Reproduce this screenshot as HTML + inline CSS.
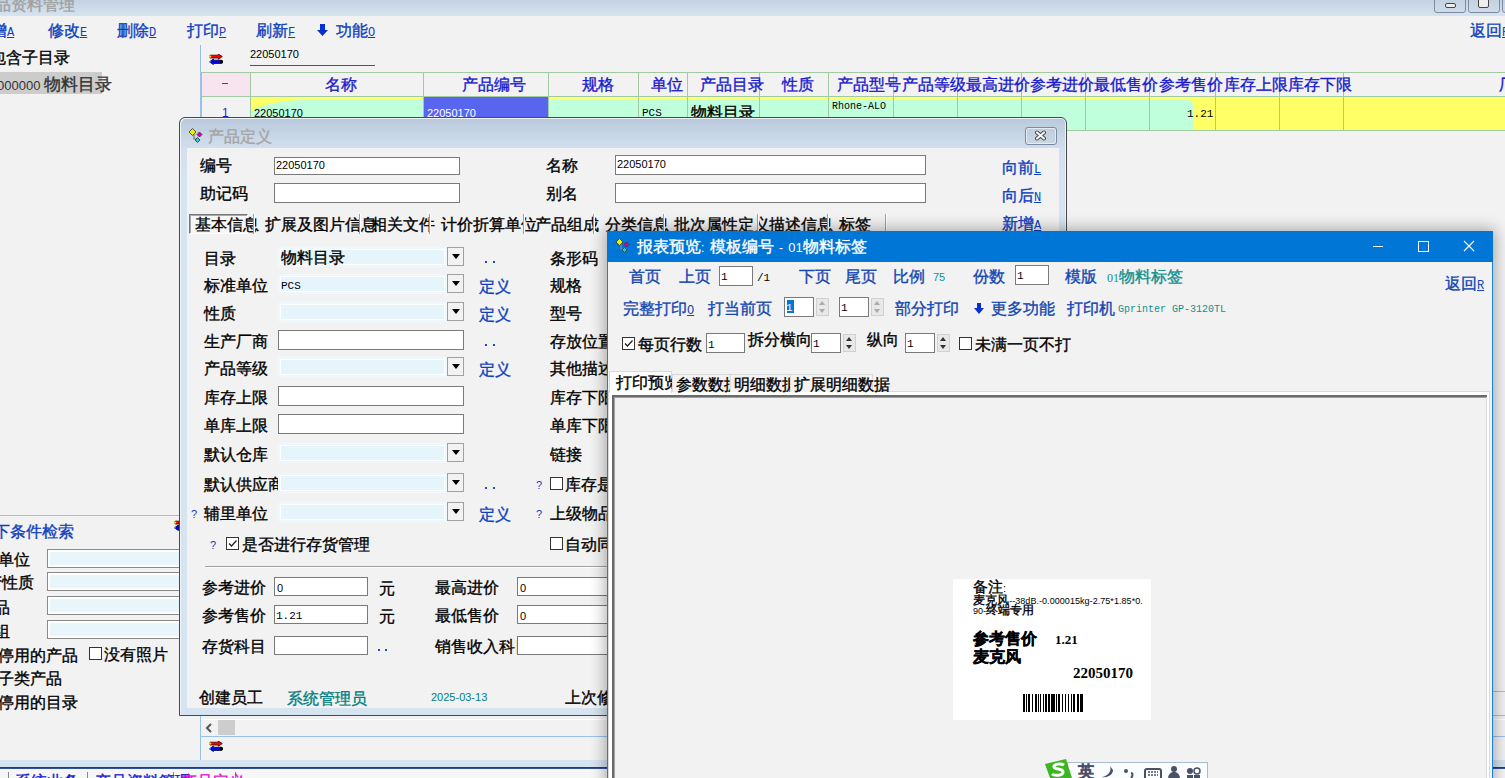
<!DOCTYPE html>
<html><head><meta charset="utf-8"><style>
*{box-sizing:border-box}
html,body{margin:0;padding:0}
body{width:1505px;height:778px;overflow:hidden;position:relative;background:#f2f2f2;font-family:"Liberation Sans",sans-serif;font-size:12px;color:#000}
.a{position:absolute}
.t{position:absolute;white-space:nowrap;font-size:12px;line-height:12px}
.c{font-style:normal;font-size:1.3333em;-webkit-text-stroke:.35px}
.m{font-family:"Liberation Mono",monospace}
.bl{color:#0f3fbf}
.u{text-decoration:underline}
.in{position:absolute;background:#fff;border:1px solid #7a7a7a}
.cb{position:absolute;background:#e6f5fc;border:2px solid #fff;outline:1px solid #e6f5fc}
.dd{position:absolute;background:#f2f2f2;border:1px solid #a0a0a0}
.dd:after{content:"";position:absolute;left:4px;top:6px;border-left:4px solid transparent;border-right:4px solid transparent;border-top:5px solid #000}
.hl{position:absolute;background:#a2c9a2}
.vl{position:absolute;background:#a2c9a2}
</style></head><body>

<!-- ============ MAIN WINDOW ============ -->
<div class=a style="left:0;top:0;width:1505px;height:16px;background:linear-gradient(#c3d2e3,#d7e3ef)"></div>
<div class=t style="left:-21px;top:-1px;color:#a0a0a0"><i class=c>产品资料管理</i></div>
<div class=a style="left:1434px;top:-4px;width:32px;height:17px;border:1px solid #7d8aa0;border-radius:3px;background:linear-gradient(#c0cfe0,#d0dcea)"></div>
<div class=a style="left:1445px;top:3px;width:11px;height:5px;border:1px solid #444;border-radius:2px;background:#eee"></div>
<div class=a style="left:1468px;top:-4px;width:32px;height:17px;border:1px solid #7d8aa0;border-radius:3px;background:linear-gradient(#c0cfe0,#d0dcea)"></div>
<div class=a style="left:1478px;top:-2px;width:11px;height:10px;border:1px solid #444;border-radius:2px;background:#eee"></div>
<div class=a style="left:1502px;top:-4px;width:12px;height:17px;border:1px solid #7d8aa0;border-radius:3px;background:linear-gradient(#c0cfe0,#d0dcea)"></div>

<!-- toolbar -->
<div class="t bl" style="left:-9px;top:25px"><i class=c>增</i><span class="m u">A</span></div>
<div class="t bl" style="left:48px;top:25px"><i class=c>修改</i><span class="m u">E</span></div>
<div class="t bl" style="left:117px;top:25px"><i class=c>删除</i><span class="m u">D</span></div>
<div class="t bl" style="left:187px;top:25px"><i class=c>打印</i><span class="m u">P</span></div>
<div class="t bl" style="left:256px;top:25px"><i class=c>刷新</i><span class="m u">F</span></div>
<svg class=a style="left:317px;top:24px" width="11" height="12" viewBox="0 0 11 12"><path d="M3 0h5v6h3l-5.5 6L0 6h3z" fill="#0a2fd0"/></svg>
<div class="t bl" style="left:336px;top:25px"><i class=c>功能</i><span class="m u">O</span></div>
<div class="t bl" style="left:1470px;top:25px"><i class=c>返回</i><span class="m u">R</span></div>

<!-- left tree -->
<div class=t style="left:-10px;top:52px"><i class=c>包含子目录</i></div>
<div class=a style="left:0;top:72px;width:102px;height:22px;background:#cccccc"></div>
<div class=t style="left:-3px;top:78px;font-size:13px;color:#333">000000 <i class=c>物料目录</i></div>

<!-- left search panel -->
<div class=a style="left:0;top:515px;width:200px;height:1px;background:#99c0e6"></div>
<div class="t bl" style="left:-6px;top:526px"><i class=c>下条件检索</i></div>
<svg class=a style="left:174px;top:520px" width="14" height="11" viewBox="0 0 14 11"><path d="M1 1.2H9.3V0L13.3 2.6 9.3 5.2V4H1z" fill="#f00" stroke="#300" stroke-width=".8"/><circle cx="1.3" cy="2.6" r="1.1" fill="#fd0"/><path d="M12.5 6.2H4.4V5L.4 7.8l4 2.8V9.4h8.1z" fill="#00f" stroke="#002" stroke-width=".8"/><circle cx="12.5" cy="7.8" r="1.7" fill="#000"/><circle cx="1" cy="7.8" r=".8" fill="#3cf"/></svg>
<div class=t style="left:-2px;top:554px"><i class=c>单位</i></div>
<div class=t style="left:-14px;top:577px"><i class=c>产性质</i></div>
<div class=t style="left:-6px;top:602px"><i class=c>品</i></div>
<div class=t style="left:-6px;top:626px"><i class=c>组</i></div>
<div class=t style="left:-2px;top:650px"><i class=c>停用的产品</i></div>
<div class=t style="left:-2px;top:673px"><i class=c>子类产品</i></div>
<div class=t style="left:-2px;top:697px"><i class=c>停用的目录</i></div>
<div class=in style="left:47px;top:549px;width:140px;height:19px;border-color:#8a8a8a;background:#e8f6fc;box-shadow:inset 0 0 0 2px #fff"></div>
<div class=in style="left:47px;top:572px;width:140px;height:19px;border-color:#8a8a8a;background:#e8f6fc;box-shadow:inset 0 0 0 2px #fff"></div>
<div class=in style="left:47px;top:596px;width:140px;height:19px;border-color:#8a8a8a;background:#e8f6fc;box-shadow:inset 0 0 0 2px #fff"></div>
<div class=in style="left:47px;top:620px;width:140px;height:19px;border-color:#8a8a8a;background:#e8f6fc;box-shadow:inset 0 0 0 2px #fff"></div>
<div class=a style="left:89px;top:647px;width:13px;height:13px;border:1px solid #333;background:#fff"></div>
<div class=t style="left:104px;top:649px"><i class=c>没有照片</i></div>

<!-- grid area -->
<div class=a style="left:200px;top:45px;width:1px;height:715px;background:#99c0e6"></div>
<div class=t style="left:250px;top:48px;font-size:11px">22050170</div>
<div class=a style="left:250px;top:65px;width:125px;height:1px;background:#555"></div>

<!-- grid header -->
<div class=a style="left:201px;top:72px;width:1304px;height:59px;background:#f2f2f2"></div>
<div class=a style="left:201px;top:73px;width:49px;height:23px;background:#f8e4ee"></div>
<div class=hl style="left:201px;top:72px;width:1304px;height:1px"></div>
<div class=hl style="left:201px;top:96px;width:1304px;height:1px"></div>
<!-- data row -->
<div class=a style="left:250px;top:97px;width:1255px;height:33px;background:#bfffdc"></div>
<div class=a style="left:250px;top:97px;width:1255px;height:3px;background:#ffff66"></div>
<div class=a style="left:1149px;top:97px;width:356px;height:33px;background:#ffff66"></div><div class=a style="left:1150px;top:100px;width:43px;height:30px;background:#bfffdc;border-top-right-radius:5px"></div><svg class=a style="left:250px;top:100px" width="50" height="12"><path d="M0 0H49C30 1 10 5 0 12z" fill="#ffff66"/></svg>
<div class=a style="left:424px;top:97px;width:124px;height:33px;background:#5865ef"></div>
<div class=hl style="left:201px;top:130px;width:1304px;height:1px"></div>
<div class=vl style="left:250px;top:72px;width:1px;height:59px"></div>
<div class=vl style="left:423px;top:72px;width:1px;height:59px"></div>
<div class=t style="left:325px;top:79px;color:#1a1acc"><i class=c>名称</i></div>
<div class=vl style="left:548px;top:72px;width:1px;height:59px"></div>
<div class=t style="left:462px;top:79px;color:#1a1acc"><i class=c>产品编号</i></div>
<div class=vl style="left:638px;top:72px;width:1px;height:59px"></div>
<div class=t style="left:582px;top:79px;color:#1a1acc"><i class=c>规格</i></div>
<div class=vl style="left:687px;top:72px;width:1px;height:59px"></div>
<div class=t style="left:651px;top:79px;color:#1a1acc"><i class=c>单位</i></div>
<div class=vl style="left:759px;top:72px;width:1px;height:59px"></div>
<div class=t style="left:700px;top:79px;color:#1a1acc"><i class=c>产品目录</i></div>
<div class=vl style="left:828px;top:72px;width:1px;height:59px"></div>
<div class=t style="left:782px;top:79px;color:#1a1acc"><i class=c>性质</i></div>
<div class=vl style="left:893px;top:72px;width:1px;height:59px"></div>
<div class=t style="left:837px;top:79px;color:#1a1acc"><i class=c>产品型号</i></div>
<div class=vl style="left:957px;top:72px;width:1px;height:59px"></div>
<div class=t style="left:902px;top:79px;color:#1a1acc"><i class=c>产品等级</i></div>
<div class=vl style="left:1021px;top:72px;width:1px;height:59px"></div>
<div class=t style="left:966px;top:79px;color:#1a1acc"><i class=c>最高进价</i></div>
<div class=vl style="left:1085px;top:72px;width:1px;height:59px"></div>
<div class=t style="left:1030px;top:79px;color:#1a1acc"><i class=c>参考进价</i></div>
<div class=vl style="left:1149px;top:72px;width:1px;height:59px"></div>
<div class=t style="left:1094px;top:79px;color:#1a1acc"><i class=c>最低售价</i></div>
<div class=vl style="left:1215px;top:72px;width:1px;height:59px"></div>
<div class=t style="left:1159px;top:79px;color:#1a1acc"><i class=c>参考售价</i></div>
<div class=vl style="left:1279px;top:72px;width:1px;height:59px"></div>
<div class=t style="left:1224px;top:79px;color:#1a1acc"><i class=c>库存上限</i></div>
<div class=vl style="left:1343px;top:72px;width:1px;height:59px"></div>
<div class=t style="left:1288px;top:79px;color:#1a1acc"><i class=c>库存下限</i></div>
<div class=t style="left:1499px;top:79px;color:#1a1acc"><i class=c>厂商</i></div>
<div class=a style="left:222px;top:83px;width:6px;height:1px;background:#f00"></div><div class=vl style="left:201px;top:72px;width:1px;height:59px"></div>
<div class=t style="left:222px;top:107px;color:#1a1acc">1</div>
<div class="t" style="left:254px;top:107px;font-size:11px">22050170</div>
<div class="t" style="left:427px;top:107px;font-size:11px;color:#fff">22050170</div>
<div class="t m" style="left:642px;top:107px;font-size:11px">PCS</div>
<div class="t" style="left:691px;top:107px"><i class=c>物料目录</i></div>
<div class="t m" style="left:832px;top:101px;font-size:10px">Rhone-ALO</div>
<div class="t m" style="left:1187px;top:108px;font-size:11px">1.21</div>
<svg class=a style="left:209px;top:54px" width="14" height="11" viewBox="0 0 14 11"><path d="M1 1.2H9.3V0L13.3 2.6 9.3 5.2V4H1z" fill="#f00" stroke="#300" stroke-width=".8"/><circle cx="1.3" cy="2.6" r="1.1" fill="#fd0"/><path d="M12.5 6.2H4.4V5L.4 7.8l4 2.8V9.4h8.1z" fill="#00f" stroke="#002" stroke-width=".8"/><circle cx="12.5" cy="7.8" r="1.7" fill="#000"/><circle cx="1" cy="7.8" r=".8" fill="#3cf"/></svg>
<!-- main bottom -->
<div class=hl style="left:201px;top:691px;width:1304px;height:1px"></div>
<div class=hl style="left:201px;top:715px;width:1304px;height:1px"></div>
<div class=a style="left:201px;top:719px;width:1304px;height:1px;background:#fff"></div>
<svg class=a style="left:205px;top:723px" width="8" height="10" viewBox="0 0 8 10"><path d="M6 1L2 5l4 4" stroke="#555" stroke-width="2" fill="none"/></svg>
<div class=a style="left:218px;top:720px;width:17px;height:15px;background:#cdcdcd"></div>
<div class=a style="left:201px;top:736px;width:1304px;height:1px;background:#99c0e6"></div>
<svg class=a style="left:209px;top:741px" width="14" height="11" viewBox="0 0 14 11"><path d="M1 1.2H9.3V0L13.3 2.6 9.3 5.2V4H1z" fill="#f00" stroke="#300" stroke-width=".8"/><circle cx="1.3" cy="2.6" r="1.1" fill="#fd0"/><path d="M12.5 6.2H4.4V5L.4 7.8l4 2.8V9.4h8.1z" fill="#00f" stroke="#002" stroke-width=".8"/><circle cx="12.5" cy="7.8" r="1.7" fill="#000"/><circle cx="1" cy="7.8" r=".8" fill="#3cf"/></svg>
<div class=a style="left:0;top:760px;width:1505px;height:7px;background:#d6e3f0"></div>
<div class=a style="left:0;top:767px;width:1505px;height:1px;background:#383c44"></div><div class=a style="left:0;top:768px;width:1505px;height:1px;background:#33509a"></div>
<div class=a style="left:0;top:769px;width:1505px;height:9px;background:#f7f7f7"></div>
<div class=a style="left:8px;top:772px;width:1px;height:6px;background:#888"></div>
<div class=a style="left:87px;top:772px;width:1px;height:6px;background:#888"></div>
<div class=a style="left:173px;top:772px;width:1px;height:6px;background:#888"></div>
<div class=a style="left:235px;top:772px;width:1px;height:6px;background:#888"></div>
<div class=t style="left:15px;top:776px;color:#1a1acc"><i class=c>系统业务</i>(?)</div>
<div class=t style="left:95px;top:776px;color:#1a1acc"><i class=c>产品资料管理</i></div>
<div class=t style="left:181px;top:776px;color:#e010d0"><i class=c>产品定义</i></div>
<!-- ============ DIALOG 产品定义 ============ -->
<div class=a style="left:179px;top:117px;width:888px;height:599px;border:1px solid #4a4a4a;border-radius:6px 6px 0 0;box-shadow:inset 1px 1px 0 #eef3f9,inset -1px 0 0 #eef3f9;background:linear-gradient(#b9c9dc 0,#d2dfed 31px,#d6e3f0 60px,#d6e3f0)"></div>
<div class=a style="left:187px;top:148px;width:872px;height:560px;background:#f2f2f2"></div>
<svg class=a style="left:188px;top:127px" width="18" height="18" viewBox="0 0 18 18"><path d="M6 5v7h4" stroke="#777" fill="none" stroke-width="1.2"/><path d="M1 5l3.5-3.5L8 5 4.5 8.5z" fill="#ee0" stroke="#333" stroke-width=".8"/><path d="M9 7.5l2.5-2.5L14 7.5 11.5 10z" fill="#d0a" stroke="#333" stroke-width=".8"/><path d="M7 13l2.5-2.5L12 13l-2.5 2.5z" fill="#2cc" stroke="#333" stroke-width=".8"/></svg>
<div class=t style="left:208px;top:131px;color:#a5a5a5"><i class=c>产品定义</i></div>
<div class=a style="left:1025px;top:127px;width:32px;height:18px;border:1px solid #7d8aa3;border-radius:3px;background:linear-gradient(#c0cedd,#cad7e5);box-shadow:inset 0 0 0 1px #e4ebf3"></div>
<svg class=a style="left:1034px;top:130px" width="14" height="12" viewBox="0 0 14 12"><path d="M3 2.5L10 8.5M10 2.5L3 8.5" stroke="#444" stroke-width="4" stroke-linecap="round"/><path d="M3 2.5L10 8.5M10 2.5L3 8.5" stroke="#f4f4f4" stroke-width="2.2" stroke-linecap="round"/></svg>
<div class=t style="left:200px;top:160px"><i class=c>编号</i></div>
<div class=t style="left:200px;top:188px"><i class=c>助记码</i></div>
<div class=in style="left:274px;top:157px;width:186px;height:18px"></div>
<div class=t style="left:276px;top:159px;font-size:11px">22050170</div>
<div class=in style="left:274px;top:183px;width:186px;height:20px"></div>
<div class=t style="left:546px;top:160px"><i class=c>名称</i></div>
<div class=t style="left:546px;top:188px"><i class=c>别名</i></div>
<div class=in style="left:615px;top:155px;width:311px;height:20px"></div>
<div class=t style="left:617px;top:158px;font-size:11px">22050170</div>
<div class=in style="left:615px;top:183px;width:311px;height:20px"></div>
<div class="t bl" style="left:1002px;top:162px"><i class=c>向前</i><span class="m u">L</span></div>
<div class="t bl" style="left:1002px;top:190px"><i class=c>向后</i><span class="m u">N</span></div>
<div class="t bl" style="left:1002px;top:218px"><i class=c>新增</i><span class="m u">A</span></div>
<div class=a style="left:189px;top:214px;width:59px;height:20px;border:1px solid;border-color:#777 #fff #fff #777;box-shadow:inset 1px 1px 0 #aaa;background:#f7f7f7"></div>
<div class=t style="left:195px;top:219px"><i class=c>基本信息</i></div>
<div class=t style="left:265px;top:219px"><i class=c>扩展及图片信息</i></div>
<div class=t style="left:371px;top:219px"><i class=c>相关文件</i></div>
<div class=t style="left:441px;top:219px"><i class=c>计价折算单位</i></div>
<div class=t style="left:535px;top:219px"><i class=c>产品组成</i></div>
<div class=t style="left:605px;top:219px"><i class=c>分类信息</i></div>
<div class=t style="left:674px;top:219px"><i class=c>批次属性定义</i></div>
<div class=t style="left:769px;top:219px"><i class=c>描述信息</i></div>
<div class=t style="left:839px;top:219px"><i class=c>标签</i></div>
<div class=a style="left:253px;top:214px;width:1px;height:20px;background:#a0a0a0;box-shadow:1px 0 0 #fff"></div>
<div class=a style="left:359px;top:214px;width:1px;height:20px;background:#a0a0a0;box-shadow:1px 0 0 #fff"></div>
<div class=a style="left:429px;top:214px;width:1px;height:20px;background:#a0a0a0;box-shadow:1px 0 0 #fff"></div>
<div class=a style="left:523px;top:214px;width:1px;height:20px;background:#a0a0a0;box-shadow:1px 0 0 #fff"></div>
<div class=a style="left:593px;top:214px;width:1px;height:20px;background:#a0a0a0;box-shadow:1px 0 0 #fff"></div>
<div class=a style="left:663px;top:214px;width:1px;height:20px;background:#a0a0a0;box-shadow:1px 0 0 #fff"></div>
<div class=a style="left:757px;top:214px;width:1px;height:20px;background:#a0a0a0;box-shadow:1px 0 0 #fff"></div>
<div class=a style="left:827px;top:214px;width:1px;height:20px;background:#a0a0a0;box-shadow:1px 0 0 #fff"></div>
<div class=a style="left:885px;top:214px;width:1px;height:20px;background:#a0a0a0;box-shadow:1px 0 0 #fff"></div>
<div class=t style="left:204px;top:253px"><i class=c>目录</i></div>
<div class=a style="left:278px;top:247px;width:169px;height:20px;background:#eef8fc;padding:2px"><div style="width:100%;height:100%;border:1px solid #fff;background:#e6f5fb"></div></div>
<div class=dd style="left:447px;top:247px;width:17px;height:19px"></div>
<div class=t style="left:281px;top:252px"><i class=c>物料目录</i></div>
<div class=a style="left:485px;top:261px;width:2px;height:2px;background:#1550c0;box-shadow:8px 0 0 #1550c0"></div>
<div class=t style="left:550px;top:253px"><i class=c>条形码</i></div>
<div class=t style="left:204px;top:280px"><i class=c>标准单位</i></div>
<div class=a style="left:278px;top:274px;width:169px;height:20px;background:#eef8fc;padding:2px"><div style="width:100%;height:100%;border:1px solid #fff;background:#e6f5fb"></div></div>
<div class=dd style="left:447px;top:274px;width:17px;height:19px"></div>
<div class=t style="left:281px;top:279px"><span class=m style="font-size:11px">PCS</span></div>
<div class="t bl" style="left:479px;top:281px"><i class=c>定义</i></div>
<div class=t style="left:550px;top:280px"><i class=c>规格</i></div>
<div class=t style="left:204px;top:308px"><i class=c>性质</i></div>
<div class=a style="left:278px;top:302px;width:169px;height:20px;background:#eef8fc;padding:2px"><div style="width:100%;height:100%;border:1px solid #fff;background:#e6f5fb"></div></div>
<div class=dd style="left:447px;top:302px;width:17px;height:19px"></div>
<div class="t bl" style="left:479px;top:309px"><i class=c>定义</i></div>
<div class=t style="left:550px;top:308px"><i class=c>型号</i></div>
<div class=t style="left:204px;top:336px"><i class=c>生产厂商</i></div>
<div class=in style="left:278px;top:330px;width:186px;height:20px"></div>
<div class=a style="left:485px;top:344px;width:2px;height:2px;background:#1550c0;box-shadow:8px 0 0 #1550c0"></div>
<div class=t style="left:550px;top:336px"><i class=c>存放位置</i></div>
<div class=t style="left:204px;top:363px"><i class=c>产品等级</i></div>
<div class=a style="left:278px;top:357px;width:169px;height:20px;background:#eef8fc;padding:2px"><div style="width:100%;height:100%;border:1px solid #fff;background:#e6f5fb"></div></div>
<div class=dd style="left:447px;top:357px;width:17px;height:19px"></div>
<div class="t bl" style="left:479px;top:364px"><i class=c>定义</i></div>
<div class=t style="left:550px;top:363px"><i class=c>其他描述</i></div>
<div class=t style="left:204px;top:392px"><i class=c>库存上限</i></div>
<div class=in style="left:278px;top:386px;width:186px;height:20px"></div>
<div class=t style="left:550px;top:392px"><i class=c>库存下限</i></div>
<div class=t style="left:204px;top:420px"><i class=c>单库上限</i></div>
<div class=in style="left:278px;top:414px;width:186px;height:20px"></div>
<div class=t style="left:550px;top:420px"><i class=c>单库下限</i></div>
<div class=t style="left:204px;top:449px"><i class=c>默认仓库</i></div>
<div class=a style="left:278px;top:443px;width:169px;height:20px;background:#eef8fc;padding:2px"><div style="width:100%;height:100%;border:1px solid #fff;background:#e6f5fb"></div></div>
<div class=dd style="left:447px;top:443px;width:17px;height:19px"></div>
<div class=t style="left:550px;top:449px"><i class=c>链接</i></div>
<div class=t style="left:204px;top:479px"><i class=c>默认供应商</i></div>
<div class=a style="left:278px;top:473px;width:169px;height:20px;background:#eef8fc;padding:2px"><div style="width:100%;height:100%;border:1px solid #fff;background:#e6f5fb"></div></div>
<div class=dd style="left:447px;top:473px;width:17px;height:19px"></div>
<div class=a style="left:485px;top:487px;width:2px;height:2px;background:#1550c0;box-shadow:8px 0 0 #1550c0"></div>
<div class=t style="left:204px;top:508px"><i class=c>辅里单位</i></div>
<div class=a style="left:278px;top:502px;width:169px;height:20px;background:#eef8fc;padding:2px"><div style="width:100%;height:100%;border:1px solid #fff;background:#e6f5fb"></div></div>
<div class=dd style="left:447px;top:502px;width:17px;height:19px"></div>
<div class="t bl" style="left:479px;top:509px"><i class=c>定义</i></div>
<div class="t bl" style="left:191px;top:508px;font-size:11px">?</div>
<div class="t bl" style="left:536px;top:479px;font-size:11px">?</div>
<div class=a style="left:550px;top:477px;width:13px;height:13px;border:1px solid #333;background:#fff"></div>
<div class=t style="left:565px;top:479px"><i class=c>库存是否</i></div>
<div class="t bl" style="left:536px;top:508px;font-size:11px">?</div>
<div class=t style="left:550px;top:508px"><i class=c>上级物品</i></div>
<div class="t bl" style="left:210px;top:539px;font-size:11px">?</div>
<div class=a style="left:226px;top:537px;width:13px;height:13px;border:1px solid #333;background:#fff"></div>
<svg class=a style="left:227px;top:538px" width="11" height="11" viewBox="0 0 11 11"><path d="M2 5.5l2.5 2.5L9.5 2.5" stroke="#222" stroke-width="1.3" fill="none"/></svg>
<div class=t style="left:242px;top:539px"><i class=c>是否进行存货管理</i></div>
<div class=a style="left:550px;top:537px;width:13px;height:13px;border:1px solid #333;background:#fff"></div>
<div class=t style="left:565px;top:539px"><i class=c>自动同步</i></div>
<div class=a style="left:205px;top:566px;width:854px;height:1px;background:#a0a0a0;box-shadow:0 1px 0 #fff"></div>
<div class=t style="left:202px;top:582px"><i class=c>参考进价</i></div>
<div class=in style="left:274px;top:577px;width:94px;height:19px"></div>
<div class="t" style="left:277px;top:582px;font-size:11px">0</div>
<div class=t style="left:379px;top:583px"><i class=c>元</i></div>
<div class=t style="left:435px;top:582px"><i class=c>最高进价</i></div>
<div class=in style="left:517px;top:577px;width:120px;height:19px"></div>
<div class="t" style="left:520px;top:582px;font-size:11px">0</div>
<div class=t style="left:202px;top:610px"><i class=c>参考售价</i></div>
<div class=in style="left:274px;top:605px;width:94px;height:19px"></div>
<div class="t m" style="left:276px;top:610px;font-size:11px">1.21</div>
<div class=t style="left:379px;top:611px"><i class=c>元</i></div>
<div class=t style="left:435px;top:610px"><i class=c>最低售价</i></div>
<div class=in style="left:517px;top:605px;width:120px;height:19px"></div>
<div class="t" style="left:520px;top:610px;font-size:11px">0</div>
<div class=t style="left:202px;top:641px"><i class=c>存货科目</i></div>
<div class=in style="left:274px;top:636px;width:94px;height:19px"></div>
<div class=a style="left:378px;top:649px;width:2px;height:2px;background:#1550c0;box-shadow:7px 0 0 #1550c0"></div>
<div class=t style="left:435px;top:641px"><i class=c>销售收入科目</i></div>
<div class=in style="left:517px;top:636px;width:120px;height:19px"></div>
<div class=t style="left:199px;top:692px"><i class=c>创建员工</i></div>
<div class=t style="left:287px;top:693px;color:#008080"><i class=c>系统管理员</i></div>
<div class=t style="left:431px;top:691px;color:#008080;font-size:11px">2025-03-13</div>
<div class=t style="left:565px;top:692px"><i class=c>上次修改</i></div>
<!-- ============ REPORT PREVIEW WINDOW ============ -->
<div class=a style="left:607px;top:231px;width:886px;height:560px;background:#f2f2f2;border:1px solid #1a80d8;box-shadow:0 0 14px 2px rgba(0,0,0,.32)"></div>
<div class=a style="left:607px;top:231px;width:886px;height:31px;background:#0076d6"></div>
<svg class=a style="left:615px;top:237px" width="18" height="18" viewBox="0 0 18 18"><path d="M6 5v7h4" stroke="#888" fill="none" stroke-width="1.2"/><path d="M1 5l3.5-3.5L8 5 4.5 8.5z" fill="#ee0" stroke="#333" stroke-width=".8"/><path d="M9 7.5l2.5-2.5L14 7.5 11.5 10z" fill="#d0a" stroke="#333" stroke-width=".8"/><path d="M7 13l2.5-2.5L12 13l-2.5 2.5z" fill="#2cc" stroke="#333" stroke-width=".8"/></svg>
<div class=t style="left:637px;top:241px;color:#fff;word-spacing:2px"><i class=c>报表预览</i>: <i class=c>模板编号</i> - <span style="font-size:13px">01</span><i class=c>物料标签</i></div>
<div class=a style="left:1373px;top:246px;width:10px;height:1px;background:#fff"></div>
<div class=a style="left:1418px;top:241px;width:11px;height:11px;border:1px solid #fff"></div>
<svg class=a style="left:1463px;top:240px" width="12" height="12" viewBox="0 0 12 12"><path d="M1 1L11 11M11 1L1 11" stroke="#fff" stroke-width="1.1"/></svg>
<div class=t style="left:629px;top:271px;color:#1346b0"><i class=c>首页</i></div>
<div class=t style="left:679px;top:271px;color:#1346b0"><i class=c>上页</i></div>
<div class=t style="left:799px;top:271px;color:#1346b0"><i class=c>下页</i></div>
<div class=t style="left:845px;top:271px;color:#1346b0"><i class=c>尾页</i></div>
<div class=t style="left:893px;top:271px;color:#1346b0"><i class=c>比例</i></div>
<div class=t style="left:973px;top:271px;color:#1346b0"><i class=c>份数</i></div>
<div class=t style="left:1065px;top:271px;color:#1346b0"><i class=c>模版</i></div>
<div class=in style="left:719px;top:266px;width:34px;height:20px"></div>
<div class="t m" style="left:721px;top:271px;font-size:11px">1</div>
<div class="t m" style="left:757px;top:272px;font-size:11px">/1</div>
<div class=t style="left:933px;top:271px;color:#119090;font-size:11px">75</div>
<div class=in style="left:1015px;top:265px;width:34px;height:20px"></div>
<div class="t m" style="left:1017px;top:270px;font-size:11px">1</div>
<div class=t style="left:1107px;top:271px;color:#119090"><span style="font-family:'Liberation Serif',serif">01</span><i class=c>物料标签</i></div>
<div class="t" style="left:1445px;top:278px;color:#1346b0"><i class=c>返回</i><span class="m u">R</span></div>
<div class=t style="left:623px;top:303px;color:#1346b0"><i class=c>完整打印</i><span class="m u">O</span></div>
<div class=t style="left:708px;top:303px;color:#1346b0"><i class=c>打当前页</i></div>
<div class=in style="left:784px;top:297px;width:30px;height:20px"></div>
<div class=a style="left:787px;top:300px;width:7px;height:13px;background:#0078d7"></div>
<div class="t m" style="left:786px;top:302px;font-size:11px;color:#fff">1</div>
<div class=a style="left:816px;top:298px;width:13px;height:18px;background:#e8e8e8;border:1px solid #d0d0d0"></div>
<div class=a style="left:819px;top:301px;border-left:3.5px solid transparent;border-right:3.5px solid transparent;border-bottom:4px solid #aaa"></div>
<div class=a style="left:819px;top:309px;border-left:3.5px solid transparent;border-right:3.5px solid transparent;border-top:4px solid #aaa"></div>
<div class=in style="left:839px;top:297px;width:30px;height:20px"></div>
<div class="t m" style="left:841px;top:302px;font-size:11px">1</div>
<div class=a style="left:871px;top:298px;width:13px;height:18px;background:#e8e8e8;border:1px solid #d0d0d0"></div>
<div class=a style="left:874px;top:301px;border-left:3.5px solid transparent;border-right:3.5px solid transparent;border-bottom:4px solid #aaa"></div>
<div class=a style="left:874px;top:309px;border-left:3.5px solid transparent;border-right:3.5px solid transparent;border-top:4px solid #aaa"></div>
<div class=t style="left:895px;top:303px;color:#1346b0"><i class=c>部分打印</i></div>
<svg class=a style="left:974px;top:303px" width="10" height="11" viewBox="0 0 10 11"><path d="M3 0h4v5h3L5 11 0 5h3z" fill="#0a2fd0"/></svg>
<div class=t style="left:991px;top:303px;color:#1346b0"><i class=c>更多功能</i></div>
<div class=t style="left:1067px;top:303px;color:#1346b0"><i class=c>打印机</i></div>
<div class="t m" style="left:1118px;top:304px;color:#119090;font-size:10px">Gprinter GP-3120TL</div>
<div class=a style="left:622px;top:337px;width:13px;height:13px;border:1px solid #333;background:#fff"></div>
<svg class=a style="left:623px;top:338px" width="11" height="11" viewBox="0 0 11 11"><path d="M2 5.5l2.5 2.5L9.5 2.5" stroke="#222" stroke-width="1.3" fill="none"/></svg>
<div class=t style="left:638px;top:339px"><i class=c>每页行数</i></div>
<div class=in style="left:706px;top:333px;width:39px;height:20px"></div>
<div class="t m" style="left:708px;top:339px;font-size:11px">1</div>
<div class=t style="left:748px;top:334px"><i class=c>拆分横向</i></div>
<div class=in style="left:811px;top:333px;width:30px;height:20px"></div>
<div class="t m" style="left:813px;top:338px;font-size:11px">1</div>
<div class=a style="left:843px;top:334px;width:13px;height:18px;background:#e8e8e8;border:1px solid #d0d0d0"></div>
<div class=a style="left:846px;top:337px;border-left:3.5px solid transparent;border-right:3.5px solid transparent;border-bottom:4px solid #333"></div>
<div class=a style="left:846px;top:345px;border-left:3.5px solid transparent;border-right:3.5px solid transparent;border-top:4px solid #333"></div>
<div class=t style="left:867px;top:334px"><i class=c>纵向</i></div>
<div class=in style="left:905px;top:333px;width:30px;height:20px"></div>
<div class="t m" style="left:907px;top:338px;font-size:11px">1</div>
<div class=a style="left:937px;top:334px;width:13px;height:18px;background:#e8e8e8;border:1px solid #d0d0d0"></div>
<div class=a style="left:940px;top:337px;border-left:3.5px solid transparent;border-right:3.5px solid transparent;border-bottom:4px solid #333"></div>
<div class=a style="left:940px;top:345px;border-left:3.5px solid transparent;border-right:3.5px solid transparent;border-top:4px solid #333"></div>
<div class=a style="left:959px;top:337px;width:13px;height:13px;border:1px solid #333;background:#fff"></div>
<div class=t style="left:975px;top:339px"><i class=c>未满一页不打</i></div>
<div class=a style="left:608px;top:391px;width:882px;height:390px;background:#fff;border:1px solid #d9d9d9"></div>
<div class=a style="left:609px;top:371px;width:63px;height:22px;background:#fff;border:1px solid #d9d9d9;border-bottom:0"></div>
<div class=t style="left:616px;top:377px"><i class=c>打印预览</i></div>
<div class=a style="left:672px;top:374px;width:59px;height:18px;background:#f2f2f2;border:1px solid #d9d9d9;border-bottom:0"></div>
<div class=t style="left:676px;top:379px"><i class=c>参数数据</i></div>
<div class=a style="left:730px;top:374px;width:61px;height:18px;background:#f2f2f2;border:1px solid #d9d9d9;border-bottom:0"></div>
<div class=t style="left:734px;top:379px"><i class=c>明细数据</i></div>
<div class=a style="left:790px;top:374px;width:83px;height:18px;background:#f2f2f2;border:1px solid #d9d9d9;border-bottom:0"></div>
<div class=t style="left:794px;top:379px"><i class=c>扩展明细数据</i></div>
<div class=a style="left:612px;top:395px;width:875px;height:390px;background:#f2f2f2;border-top:2px solid #6b6b6b;border-left:2px solid #6b6b6b;box-shadow:inset 1px 1px 0 #a0a0a0"></div>
<div class=a style="left:1486px;top:397px;width:1px;height:390px;background:#dcdcdc"></div>
<div class=a style="left:953px;top:579px;width:198px;height:141px;background:#fff"></div>
<div class=t style="left:973px;top:581px;font-size:11px"><i class=c>备注</i>:</div>
<div class=t style="left:973px;top:596px;font-size:9px;line-height:8px;letter-spacing:.05px"><i class=c>麦克风</i>--38dB.-0.000015kg-2.75*1.85*0.</div>
<div class=t style="left:973px;top:606px;font-size:9px;line-height:8px">90-<i class=c>终端专用</i></div>
<div class=t style="left:973px;top:633px;font-weight:bold"><i class=c>参考售价</i></div>
<div class="t" style="left:1055px;top:634px;font-weight:bold;font-family:'Liberation Serif',serif;font-size:13px">1.21</div>
<div class=t style="left:973px;top:651px;font-weight:bold"><i class=c>麦克风</i></div>
<div class="t" style="left:1073px;top:667px;font-weight:bold;font-family:'Liberation Serif',serif;font-size:15px">22050170</div>
<svg class=a style="left:1023px;top:694px" width="61" height="18"><rect x="0" y="0" width="2" height="18"/><rect x="3" y="0" width="1" height="18"/><rect x="5" y="0" width="2" height="18"/><rect x="9" y="0" width="1" height="18"/><rect x="12" y="0" width="2" height="18"/><rect x="15" y="0" width="1" height="18"/><rect x="17" y="0" width="1" height="18"/><rect x="20" y="0" width="1" height="18"/><rect x="22" y="0" width="2" height="18"/><rect x="25" y="0" width="2" height="18"/><rect x="28" y="0" width="4" height="18"/><rect x="33" y="0" width="1" height="18"/><rect x="35" y="0" width="2" height="18"/><rect x="39" y="0" width="1" height="18"/><rect x="42" y="0" width="1" height="18"/><rect x="45" y="0" width="1" height="18"/><rect x="48" y="0" width="1" height="18"/><rect x="50" y="0" width="2" height="18"/><rect x="54" y="0" width="2" height="18"/><rect x="57" y="0" width="3" height="18"/></svg>
<div class=a style="left:1067px;top:762px;width:141px;height:20px;background:#fbfcfe;border:1px solid #a9bccf"></div>
<svg class=a style="left:1044px;top:758px" width="30" height="20" viewBox="0 0 30 20"><path d="M1 6L22 1l6 19H6z" fill="#3cb521"/><path d="M20 7c-3-2-11-1-10 2s9 1 9 5-9 4-11 2" stroke="#fff" stroke-width="3" fill="none"/></svg>
<div class=t style="left:1078px;top:766px;font-weight:bold;color:#4a5068"><i class=c>英</i></div>
<svg class=a style="left:1100px;top:763px" width="110" height="15" viewBox="0 0 110 15"><path d="M10 3c2 5-2 10-8 11 5 1 11-2 11-7z" fill="#4a5068"/><circle cx="26" cy="8" r="2" fill="#4a5068"/><path d="M31 10c2 0 2 3 0 5" stroke="#4a5068" stroke-width="2" fill="none"/><rect x="45" y="6" width="16" height="12" rx="2" fill="none" stroke="#4a5068" stroke-width="2"/><path d="M48 9h10M48 12h10" stroke="#4a5068" stroke-width="1.5" stroke-dasharray="2 1"/><circle cx="74" cy="6" r="3" fill="#4a5068"/><path d="M68 16c0-5 3-7 6-7s6 2 6 7z" fill="#4a5068"/><circle cx="90" cy="8" r="3" fill="#4a5068"/><circle cx="97" cy="8" r="3" fill="none" stroke="#4a5068" stroke-width="1.5"/><rect x="87" y="12" width="6" height="4" fill="#4a5068"/><rect x="94" y="12" width="6" height="4" fill="#4a5068"/></svg>
</body></html>
